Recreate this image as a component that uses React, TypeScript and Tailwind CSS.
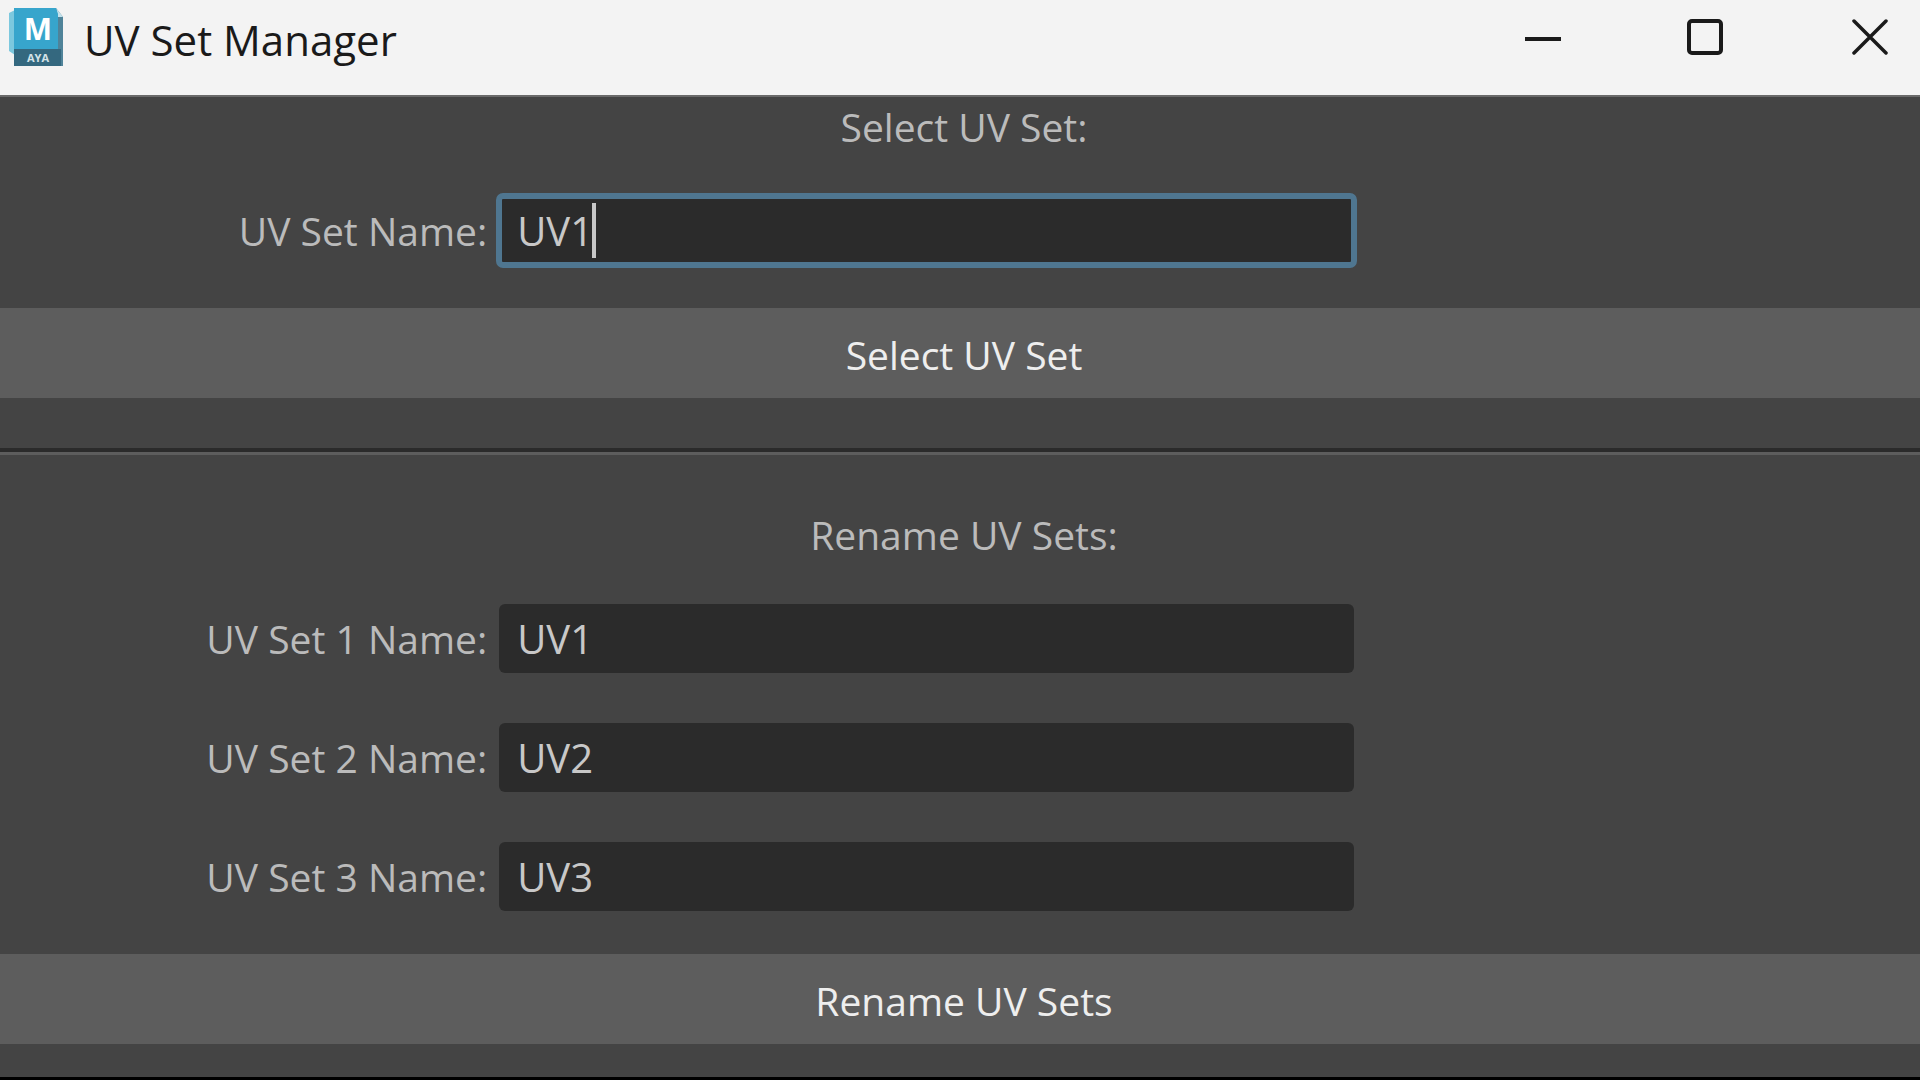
import { useState } from "react";

const renameFields = [
  { id: "uv-set-1", label: "UV Set 1 Name:", initial: "UV1" },
  { id: "uv-set-2", label: "UV Set 2 Name:", initial: "UV2" },
  { id: "uv-set-3", label: "UV Set 3 Name:", initial: "UV3" },
];

function AppIcon() {
  return (
    <svg viewBox="0 0 56 60" className="w-14 h-[60px]" aria-hidden="true">
      <path d="M1 5 L7 2 V47 L1 43 Z" fill="#7cc8de" />
      <path d="M6 0 H48 L55 9 V58 H6 Z" fill="#4f8399" />
      <path d="M48 0 L55 9 H50 Z" fill="#c4e2ec" />
      <path d="M6 0 H48 L50 6 V42 H6 Z" fill="#37a5cc" />
      <path d="M6 41 H53 V58 H6 Z" fill="#34687f" />
      <text x="30" y="32" textAnchor="middle" fontSize="30" fontWeight="700" fill="#fff">
        M
      </text>
      <text x="30" y="54" textAnchor="middle" fontSize="11" fontWeight="700" fill="#d5e3e8">
        AYA
      </text>
    </svg>
  );
}

function TitleBar() {
  return (
    <header className="flex h-[95px] items-start justify-between bg-[#f3f3f3] text-[#1a1a1a]">
      <div className="flex items-start gap-5 pt-2 pl-2">
        <AppIcon />
        <h1 className="text-[42px] leading-[64px]">UV Set Manager</h1>
      </div>
      <div className="flex h-[76px] items-center">
        <button type="button" aria-label="Minimize" className="flex h-full w-[162px] items-center justify-center">
          <svg viewBox="0 0 38 38" className="size-[38px]" fill="none" stroke="currentColor" strokeWidth="4">
            <path d="M1 20 H37" />
          </svg>
        </button>
        <button type="button" aria-label="Maximize" className="flex h-full w-[162px] items-center justify-center">
          <svg viewBox="0 0 38 38" className="size-[38px]" fill="none" stroke="currentColor" strokeWidth="4">
            <rect x="3" y="2" width="32" height="32" rx="3" />
          </svg>
        </button>
        <button type="button" aria-label="Close" className="flex h-full w-[134px] items-center justify-end pr-[31px]">
          <svg viewBox="0 0 38 38" className="size-[38px]" fill="none" stroke="currentColor" strokeWidth="3.5" strokeLinecap="round">
            <path d="M3 2 L35 34 M35 2 L3 34" />
          </svg>
        </button>
      </div>
    </header>
  );
}

type FieldProps = {
  id: string;
  label: string;
  initial: string;
  active?: boolean;
};

function Field({ id, label, initial, active }: FieldProps) {
  const [value, setValue] = useState(initial);

  return (
    <div className="flex items-center">
      <label htmlFor={id} className="w-[26%] pr-3 text-right text-[#bbbbbb]">
        {label}
      </label>
      <div className="relative w-[44.5%]">
        <input
          id={id}
          type="text"
          value={value}
          onChange={(e) => setValue(e.target.value)}
          className={
            active
              ? "block h-[69px] w-full rounded-[4px] bg-[#2b2b2b] pl-[18px] text-[40px] text-[#c8c8c8] caret-transparent outline-6 -outline-offset-3 outline-[#4f7690]"
              : "block h-[69px] w-full rounded-[6px] bg-[#2b2b2b] pl-[18px] text-[40px] text-[#c8c8c8] outline-none"
          }
        />
        {active && <span className="absolute top-[7px] left-[93px] h-[55px] w-1 bg-[#c8c8c8]" />}
      </div>
    </div>
  );
}

function ActionButton({ children }: { children: string }) {
  return (
    <button type="button" className="block h-[90px] w-full bg-[#5d5d5d] pt-1 pl-2 text-center text-[#eeeeee]">
      {children}
    </button>
  );
}

export default function App() {
  return (
    <div className="flex min-h-screen flex-col bg-[#444444] font-['Open_Sans','Noto_Sans',sans-serif]">
      <TitleBar />
      <main className="flex flex-1 flex-col border-t-2 border-b-3 border-t-[#6a6a6a] border-b-black text-[39px] leading-[60px]">
        <h2 className="pl-2 text-center text-[#bbbbbb]">Select UV Set:</h2>
        <div className="pt-[39px] pb-[43px]">
          <Field id="uv-set-select" label="UV Set Name:" initial="UV1" active />
        </div>
        <ActionButton>Select UV Set</ActionButton>
        <hr className="mt-[50px] h-[7px] border-t-4 border-b-3 border-t-[#2b2b2b] border-b-[#5d5d5d]" />
        <h2 className="mt-[50px] pl-2 text-center text-[#bbbbbb]">Rename UV Sets:</h2>
        <div className="flex flex-col gap-[50px] pt-[39px] pb-[43px]">
          {renameFields.map((field) => (
            <Field key={field.id} {...field} />
          ))}
        </div>
        <ActionButton>Rename UV Sets</ActionButton>
      </main>
    </div>
  );
}
